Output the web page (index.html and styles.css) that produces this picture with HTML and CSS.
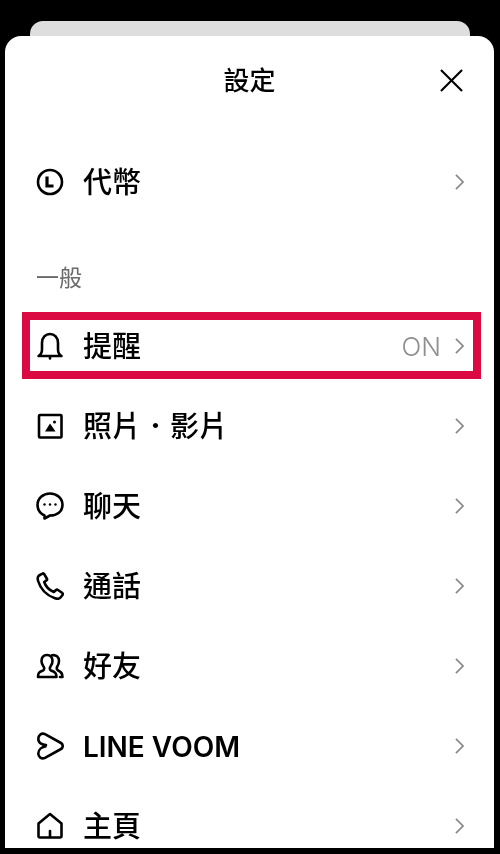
FILE: index.html
```html
<!DOCTYPE html>
<html lang="zh-Hant">
<head>
<meta charset="utf-8">
<title>設定</title>
<link rel="stylesheet" href="styles.css">
</head>
<body>
<div class="back-sheet"></div>
<main class="sheet">
  <header class="header">
    <h1 class="title">設定</h1>
    <svg class="close" viewBox="0 0 24 24"><path d="M1 1L23 23M23 1L1 23"/></svg>
  </header>
  <ul class="list first">
    <li class="row">
      <svg class="icon" viewBox="0 0 28 28"><circle cx="14" cy="14" r="12"/><path class="thick" d="M11 8.500V18H17.500"/></svg>
      <span class="label">代幣</span>
      <svg class="chev" viewBox="0 0 10 18"><path d="M1 1L9 9L1 17"/></svg>
    </li>
  </ul>
  <h2 class="section">一般</h2>
  <ul class="list">
    <li class="row highlighted">
      <svg class="icon" viewBox="0 0 28 28"><path d="M2.500 24C5 22.500 6 20.500 6 17.500V11C6 5.500 9.500 2 14 2S22 5.500 22 11V17.500C22 20.500 23 22.500 25.500 24Z"/><path d="M14 24.500V26.500"/></svg>
      <span class="label">提醒</span>
      <span class="value">ON</span>
      <svg class="chev" viewBox="0 0 10 18"><path d="M1 1L9 9L1 17"/></svg>
      <span class="marker"></span>
    </li>
    <li class="row">
      <svg class="icon" viewBox="0 0 28 28"><rect class="square" x="3" y="3" width="22.500" height="22.500" rx="1"/><path class="solid" d="M9 19.500L14 11.500L19.500 19.500Z"/><circle class="solid" cx="18.500" cy="10" r="1.500"/></svg>
      <span class="label">照片．影片</span>
      <svg class="chev" viewBox="0 0 10 18"><path d="M1 1L9 9L1 17"/></svg>
    </li>
    <li class="row">
      <svg class="icon" viewBox="0 0 28 28"><path d="M14 1.500C7 1.500 1.500 6.500 1.500 13C1.500 18 4.500 21.500 8.500 23.500L8.500 26.500L14 23.500C21 23.500 26.500 19.500 26.500 13C26.500 6.500 21 1.500 14 1.500Z"/><circle class="solid" cx="8.500" cy="12.500" r="1.200"/><circle class="solid" cx="14" cy="12.500" r="1.200"/><circle class="solid" cx="19.500" cy="12.500" r="1.200"/></svg>
      <span class="label">聊天</span>
      <svg class="chev" viewBox="0 0 10 18"><path d="M1 1L9 9L1 17"/></svg>
    </li>
    <li class="row">
      <svg class="icon" viewBox="0 0 28 28"><path d="M3 3.500L6 1.800C7 1.200 7.800 1.500 8.300 2.300L10.800 6.500C11.300 7.300 11 8 10.300 8.500L8.200 10C9.700 14.500 13 18 17.800 20L19.800 18.200C20.500 17.600 21.300 17.500 22 18L26 20.800C26.800 21.400 27 22.200 26.500 23L24.500 25.500C23.500 26.700 21 27 19 26.300C11 23.500 4.500 17 2.100 9C1.500 7 1.800 4.500 3 3.500Z"/></svg>
      <span class="label">通話</span>
      <svg class="chev" viewBox="0 0 10 18"><path d="M1 1L9 9L1 17"/></svg>
    </li>
    <li class="row">
      <svg class="icon" viewBox="0 0 28 28"><path d="M2 25H20.500C20.500 21 19 20 15 18.500C13.500 17.800 13.500 15.800 14.500 14.500C15.700 13 16.500 11 16.500 9C16.500 5.500 14.500 3 11 3S5.500 5.500 5.500 9C5.500 11 6.300 13 7.500 14.500C8.500 15.800 8.500 17.800 7 18.500C3 20 2 21 2 25Z"/><path d="M16 3.200C20 2.500 23 5 23 9C23 11.500 22 13.500 21 15C20.500 16.500 21 18 22.500 18.800C25.500 20 26.500 21.500 26.500 25H24"/></svg>
      <span class="label">好友</span>
      <svg class="chev" viewBox="0 0 10 18"><path d="M1 1L9 9L1 17"/></svg>
    </li>
    <li class="row">
      <svg class="icon" viewBox="0 0 28 28"><path d="M10 13C7 13 2.300 11.500 2.300 7C2.300 3 5.500 0.500 9 2.200L25 11C27.300 12.300 27.300 15.700 25 17L9 25.800C5.500 27.500 2.300 25 2.300 21.500C2.300 17.500 6 15 9.500 14.500"/></svg>
      <span class="label latin">LINE VOOM</span>
      <svg class="chev" viewBox="0 0 10 18"><path d="M1 1L9 9L1 17"/></svg>
    </li>
    <li class="row">
      <svg class="icon" viewBox="0 0 28 28"><path d="M2.500 11.500L14 2L25.500 11.500V24C25.500 25 25 25.500 24 25.500H4C3 25.500 2.500 25 2.500 24Z"/><path d="M14 25V19"/></svg>
      <span class="label">主頁</span>
      <svg class="chev" viewBox="0 0 10 18"><path d="M1 1L9 9L1 17"/></svg>
    </li>
  </ul>
</main>
</body>
</html>
```
FILE: styles.css
```css
* { box-sizing: border-box; }
html, body { margin: 0; height: 854px; overflow: hidden; background: #000; }
body {
  display: flex;
  flex-direction: column;
  align-items: center;
  padding-top: 21px;
  font-family: Inter, "Noto Sans CJK TC", sans-serif;
  color: #000;
}
.back-sheet {
  width: 440px;
  height: 15px;
  flex: none;
  background: #dedede;
  border-radius: 13px 13px 0 0;
}
.sheet {
  width: 489px;
  height: 812px;
  flex: none;
  margin-left: -1px;
  background: #fff;
  border-radius: 16px 16px 0 0;
  overflow: hidden;
  filter: blur(0.25px);
}
.header {
  height: 88px;
  position: relative;
  display: flex;
  align-items: center;
  justify-content: center;
}
.title { margin: 1px 0 0; font-size: 26px; font-weight: 500; line-height: 1; }
.close {
  position: absolute;
  right: 31px;
  top: 33px;
  width: 23px;
  height: 23px;
  fill: none;
  stroke: #000;
  stroke-width: 2.200;
}
.list { list-style: none; margin: 0; padding: 0; }
.first { padding-top: 18px; }
.section {
  margin: 0;
  height: 84px;
  padding: 40px 0 0 31px;
  font-size: 23px;
  line-height: 32px;
  font-weight: 400;
  color: #6a6a6a;
}
.row {
  position: relative;
  height: 80px;
  display: flex;
  align-items: center;
  padding: 0 30px 0 31px;
}
.icon {
  width: 28px;
  height: 28px;
  flex: none;
  margin-right: 19px;
  fill: none;
  stroke: #000;
  stroke-width: 2.600;
  stroke-linejoin: round;
  stroke-linecap: round;
}
.icon .solid { fill: #000; stroke: none; }
.icon .thick { stroke-width: 3.200; stroke-linecap: butt; stroke-linejoin: miter; }
.label { flex: 1; font-size: 29px; font-weight: 500; line-height: 40px; white-space: nowrap; padding-top: 2px; }
.latin { font-size: 28px; font-weight: 600; }
.value { font-size: 26px; font-weight: 300; color: #8f8f8f; margin-right: 14px; line-height: 1; padding-top: 2px; }
.chev {
  width: 9px;
  height: 16px;
  flex: none;
  fill: none;
  stroke: #888;
  stroke-width: 1.900;
}
.marker {
  position: absolute;
  left: 17px;
  top: 6px;
  width: 459px;
  height: 67px;
  border: 8px solid #dc0a43;
}
```
